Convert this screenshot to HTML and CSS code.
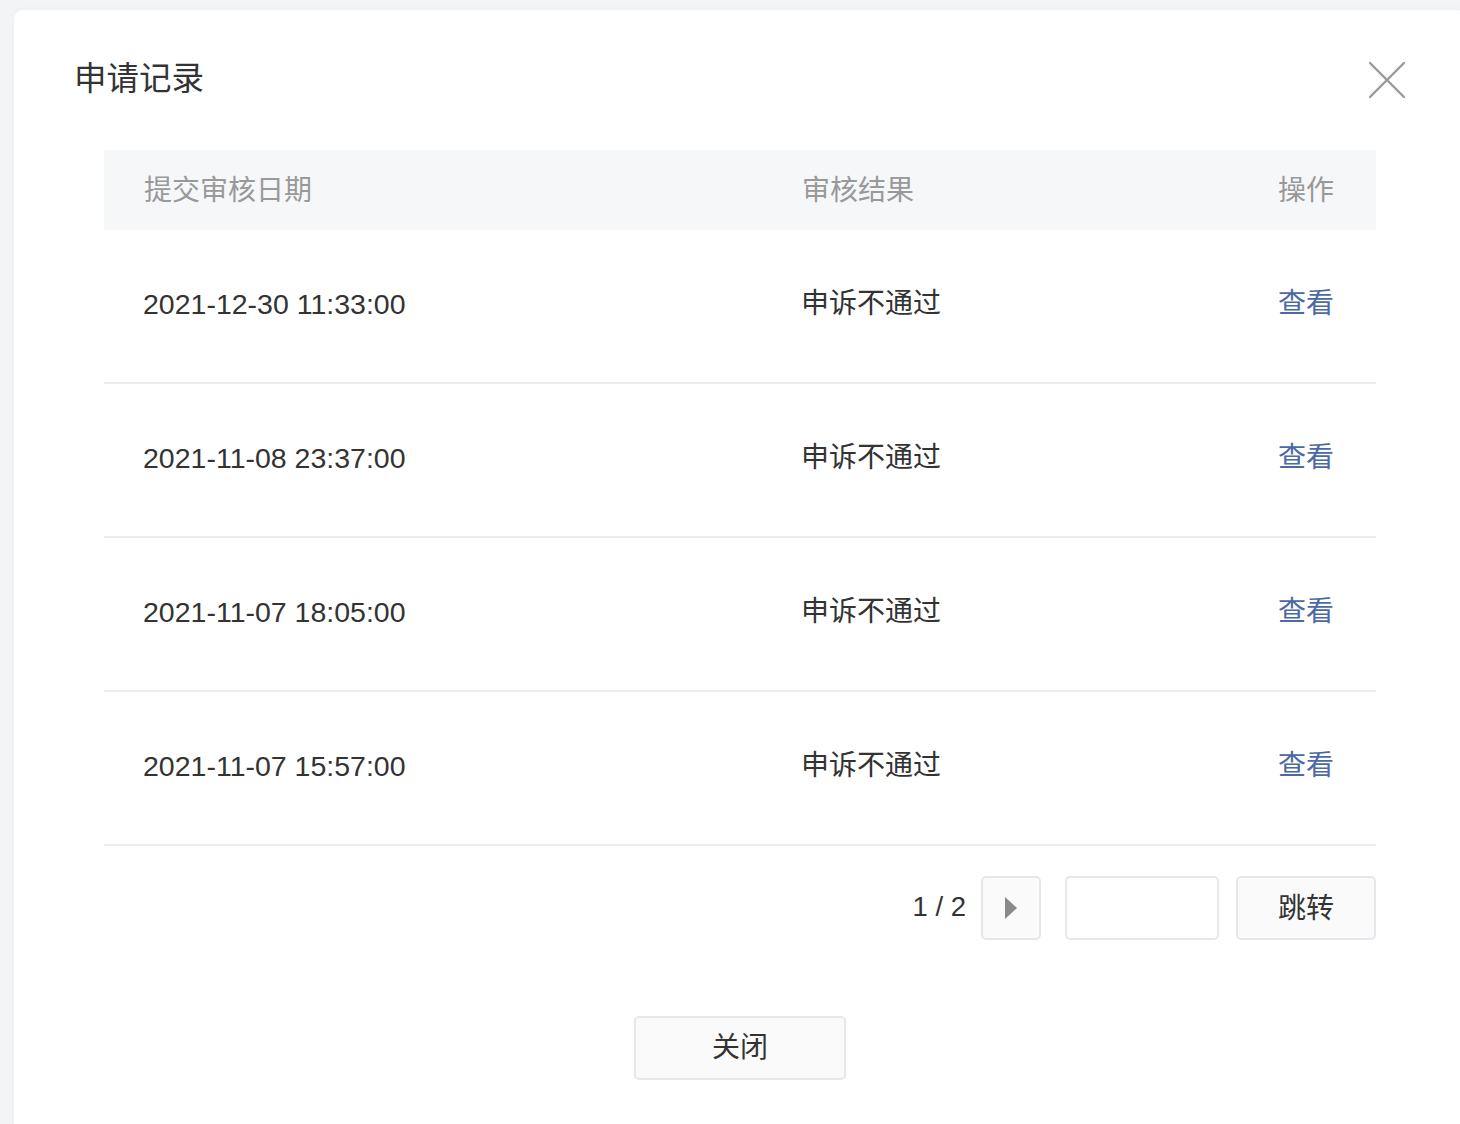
FILE: index.html
```html
<!DOCTYPE html>
<html lang="zh">
<head>
<meta charset="utf-8">
<title>申请记录</title>
<link rel="stylesheet" href="styles.css">
</head>
<body>
<div class="modal">
  <div class="modal-head">
    <h1 class="modal-title">申请记录</h1>
    <button class="close-x" aria-label="关闭">
      <svg width="38" height="38" viewBox="0 0 38 38"><path d="M2 2 L36 36 M36 2 L2 36" stroke="#999" stroke-width="2.4" stroke-linecap="round" fill="none"/></svg>
    </button>
  </div>
  <div class="table">
    <div class="row head">
      <div class="c1">提交审核日期</div>
      <div class="c2">审核结果</div>
      <div class="c3">操作</div>
    </div>
    <div class="row">
      <div class="c1">2021-12-30 11:33:00</div>
      <div class="c2">申诉不通过</div>
      <div class="c3"><a class="link">查看</a></div>
    </div>
    <div class="row">
      <div class="c1">2021-11-08 23:37:00</div>
      <div class="c2">申诉不通过</div>
      <div class="c3"><a class="link">查看</a></div>
    </div>
    <div class="row">
      <div class="c1">2021-11-07 18:05:00</div>
      <div class="c2">申诉不通过</div>
      <div class="c3"><a class="link">查看</a></div>
    </div>
    <div class="row">
      <div class="c1">2021-11-07 15:57:00</div>
      <div class="c2">申诉不通过</div>
      <div class="c3"><a class="link">查看</a></div>
    </div>
  </div>
  <div class="pager">
    <span class="page-num">1 / 2</span>
    <button class="btn next" aria-label="下一页">
      <svg width="14" height="24" viewBox="0 0 14 24"><path d="M1 1 L13 12 L1 23 Z" fill="#8a8a8a"/></svg>
    </button>
    <input class="page-input" type="text">
    <button class="btn jump">跳转</button>
  </div>
  <div class="footer">
    <button class="btn close-btn">关闭</button>
  </div>
</div>
</body>
</html>
```
FILE: styles.css
```css
html, body {
  margin: 0;
  padding: 0;
}
body {
  width: 1460px;
  height: 1124px;
  overflow: hidden;
  background: #f3f4f6;
  font-family: "Liberation Sans", Arial, "Noto Sans CJK SC", sans-serif;
  color: #333;
}
.modal {
  margin: 10px 0 0 14px;
  width: 1452px;
  height: 1140px;
  background: #fff;
  border-radius: 9px;
  box-shadow: 0 0 10px rgba(0,0,0,0.03);
  box-sizing: border-box;
  padding: 0 90px;
}
.modal-head {
  display: flex;
  justify-content: space-between;
  align-items: center;
  margin: 0 -30px 0 -28px;
  height: 140px;
}
.modal-title {
  margin: 0;
  font-size: 32.5px;
  font-weight: normal;
  color: #333;
  line-height: 1;
  margin-top: -2px;
  margin-left: -2px;
}
.close-x {
  border: 0;
  background: none;
  padding: 0;
  width: 38px;
  height: 38px;
  margin-top: 0;
  cursor: pointer;
}
.close-x svg { display: block; }
.table {
  width: 100%;
}
.row {
  display: flex;
  align-items: center;
  height: 152px;
  border-bottom: 2px solid #ebecef;
  font-size: 28.5px;
  color: #333;
  padding: 0 42px 0 39px;
}
.row > div { line-height: 1; }
.row.head {
  height: 80px;
  background: #f6f7f9;
  border-bottom: 0;
  color: #999;
  font-size: 28px;
  padding-left: 40px;
}
.row.head > div { margin-top: 1px; }
.row:not(.head) > div { margin-top: -4px; }
.c1 { width: 659px; }
.row.head .c1 { width: 658px; }
.c2 { flex: 1; }
.row:not(.head) .c2 { font-size: 28px; margin-left: -1px; }
.row:not(.head) .c3 { font-size: 28px; }
.c3 { text-align: right; }
.link {
  color: #4b69a4;
  text-decoration: none;
  cursor: pointer;
}
.pager {
  display: flex;
  justify-content: flex-end;
  align-items: center;
  margin-top: 30px;
  height: 64px;
}
.page-num {
  font-size: 27.5px;
  color: #333;
  margin-right: 15px;
  margin-top: -2px;
}
.btn {
  background: #fafafa;
  border: 2px solid #e4e7eb;
  border-radius: 5px;
  box-sizing: border-box;
  height: 64px;
  font-family: inherit;
  font-size: 28px;
  color: #333;
  padding: 0 0 4px;
  cursor: pointer;
}
.next {
  width: 60px;
  display: flex;
  align-items: center;
  justify-content: center;
  padding: 0;
}
.next svg { display: block; }
.page-input {
  width: 154px;
  height: 64px;
  box-sizing: border-box;
  border: 2px solid #e4e7eb;
  border-radius: 5px;
  margin: 0 17px 0 24px;
  background: #fff;
  padding: 0 10px;
  font-size: 26px;
  outline: none;
}
.jump {
  width: 140px;
}
.footer {
  display: flex;
  justify-content: center;
  margin-top: 76px;
}
.close-btn {
  width: 212px;
  padding-bottom: 6px;
}
```
